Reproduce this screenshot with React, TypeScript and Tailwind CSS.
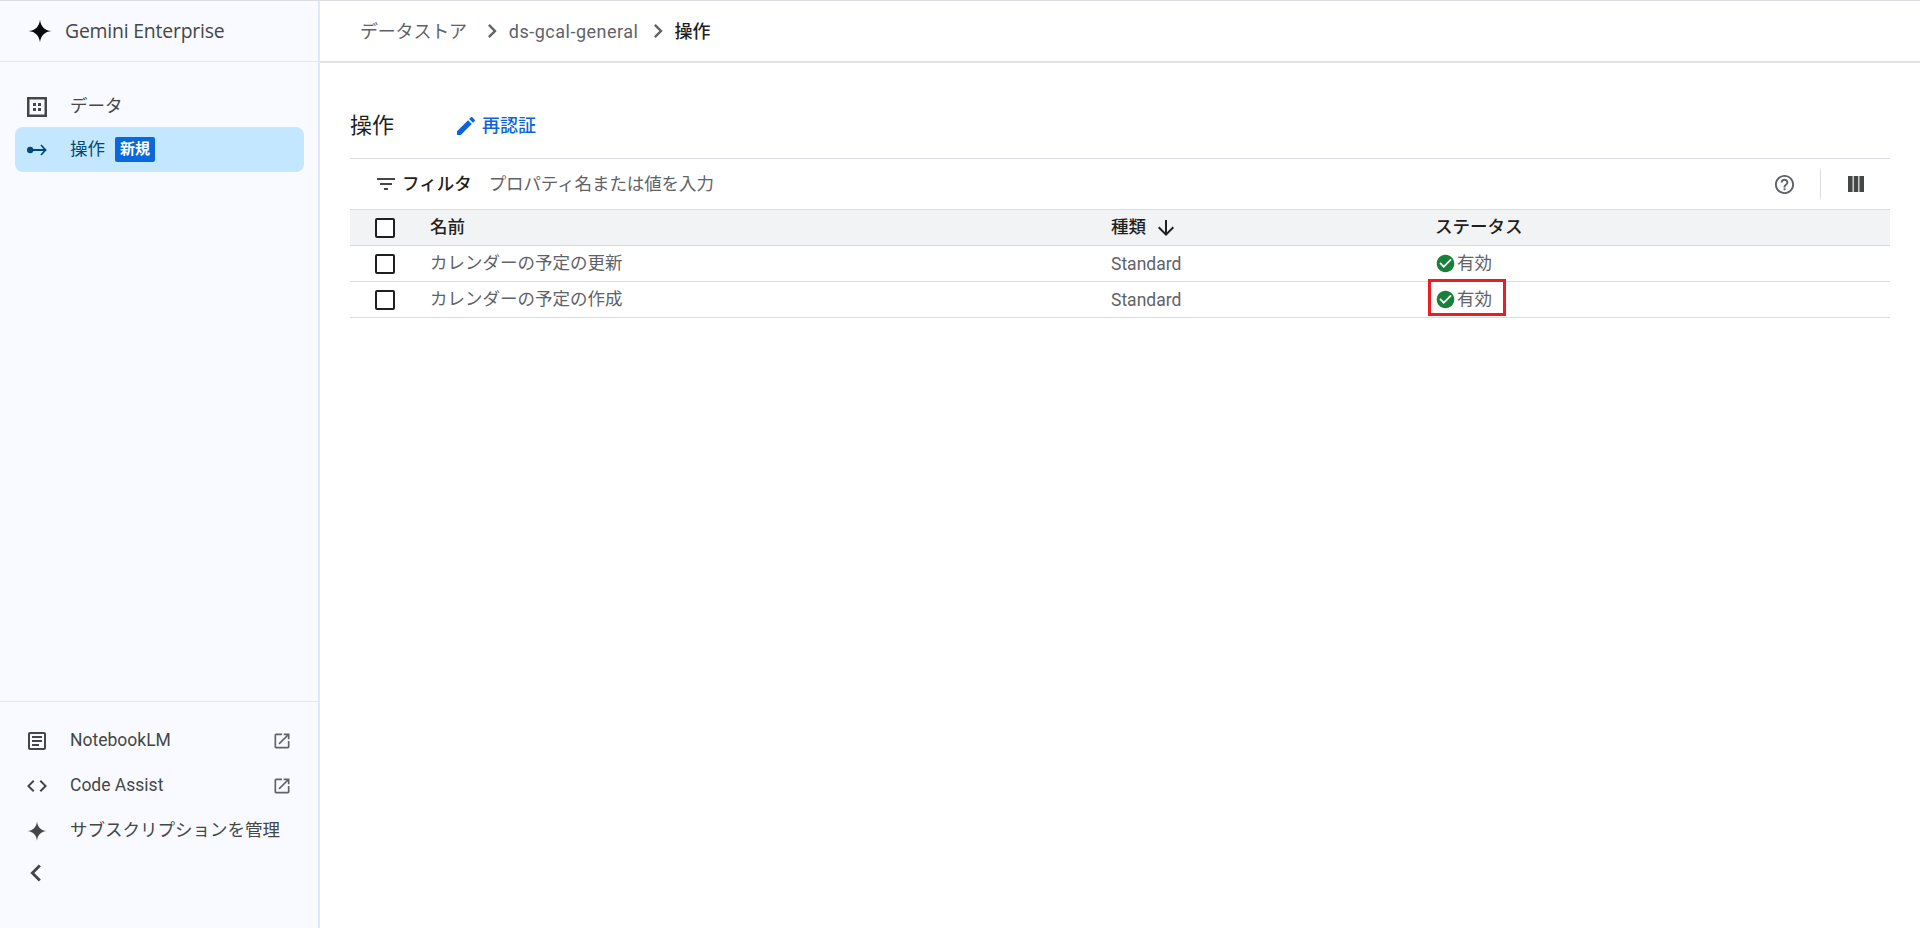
const paths = {
  article:
    "M19 5v14H5V5h14m0-2H5c-1.1 0-2 .9-2 2v14c0 1.1.9 2 2 2h14c1.1 0 2-.9 2-2V5c0-1.1-.9-2-2-2z M14 17H7v-2h7v2zm3-4H7v-2h10v2zm0-4H7V7h10v2z",
  code: "M9.4 16.6L4.8 12l4.6-4.6L8 6l-6 6 6 6 1.4-1.4zm5.2 0l4.6-4.6-4.6-4.6L16 6l6 6-6 6-1.4-1.4z",
  open: "M19 19H5V5h7V3H5c-1.11 0-2 .9-2 2v14c0 1.1.89 2 2 2h14c1.1 0 2-.9 2-2v-7h-2v7zM14 3v2h3.59l-9.83 9.83 1.41 1.41L19 6.41V10h2V3h-7z",
  left: "M15.41 7.41L14 6l-6 6 6 6 1.41-1.41L10.83 12z",
  right: "M10 6L8.59 7.41 13.17 12l-4.58 4.59L10 18l6-6z",
  edit: "M3 17.25V21h3.75L17.81 9.94l-3.75-3.75L3 17.25zM20.71 7.04c.39-.39.39-1.02 0-1.41l-2.34-2.34c-.39-.39-1.02-.39-1.41 0l-1.83 1.83 3.75 3.75 1.83-1.83z",
  filter: "M10 18h4v-2h-4v2zM3 6v2h18V6H3zm3 7h12v-2H6v2z",
  down: "M20 12l-1.41-1.41L13 16.17V4h-2v12.17l-5.58-5.59L4 12l8 8 8-8z",
  help: "M11 18h2v-2h-2v2zm1-16C6.48 2 2 6.48 2 12s4.48 10 10 10 10-4.48 10-10S17.52 2 12 2zm0 18c-4.41 0-8-3.59-8-8s3.59-8 8-8 8 3.59 8 8-3.59 8-8 8zm0-14c-2.21 0-4 1.79-4 4h2c0-1.1.9-2 2-2s2 .9 2 2c0 2-3 1.75-3 5h2c0-2.25 3-2.5 3-5 0-2.21-1.79-4-4-4z",
  check: "M12 2C6.48 2 2 6.48 2 12s4.48 10 10 10 10-4.48 10-10S17.52 2 12 2zm-2 15l-5-5 1.41-1.41L10 14.17l7.59-7.59L19 8l-9 9z",
  spark: "M12 1.5C12.6 7.6 16.4 11.4 22.5 12C16.4 12.6 12.6 16.4 12 22.5C11.4 16.4 7.6 12.6 1.5 12C7.6 11.4 11.4 7.6 12 1.5Z",
};

function Icon({ d, className }: { d: string; className: string }) {
  return (
    <svg viewBox="0 0 24 24" fill="currentColor" className={className}>
      <path d={d} />
    </svg>
  );
}

function Checkbox() {
  return <span className="block w-5 h-5 rounded-[2px] border-2 border-[#1f1f1f] bg-white" />;
}

function NavItem({ icon, label, external }: { icon: React.ReactNode; label: string; external?: boolean }) {
  return (
    <div className="flex items-center h-[45px] pl-[14px] pr-[26px] text-[#444746]">
      <span className="w-[45px] flex justify-center shrink-0">{icon}</span>
      <span className="flex-1 ml-[11px]">{label}</span>
      {external && <Icon d={paths.open} className="w-5 h-5 text-[#5f6368]" />}
    </div>
  );
}

const rows = ["カレンダーの予定の更新", "カレンダーの予定の作成"];

export default function App() {
  return (
    <div className="h-[928px] w-[1920px] overflow-hidden flex border-t border-[#dadce0] bg-white text-[17.5px] font-['Roboto','Noto_Sans_CJK_JP',sans-serif]">
      <aside className="w-[320px] shrink-0 flex flex-col bg-[#f8faff] border-r-2 border-[#dfe8fa]">
        <div className="h-[61px] shrink-0 flex items-center pl-[27px] border-b border-[#dfe8fa]">
          <Icon d={paths.spark} className="w-[26px] h-[26px] text-[#0a0a0a]" />
          <span className="ml-[12px] text-[19.4px] text-[#444746] font-['Open_Sans','Roboto',sans-serif] tracking-[-0.2px]">
            Gemini Enterprise
          </span>
        </div>

        <nav className="flex-1 pt-[22px]">
          <div className="flex items-center h-[45px] pl-[14px] text-[#444746]">
            <span className="w-[45px] flex justify-center">
              <svg viewBox="0 0 20 20" className="w-5 h-5">
                <rect x="1.25" y="1.25" width="17.5" height="17.5" fill="none" stroke="#444746" strokeWidth="2.5" />
                <rect x="6" y="6" width="3" height="3" fill="#444746" />
                <rect x="11" y="6" width="3" height="3" fill="#444746" />
                <rect x="6" y="11" width="3" height="3" fill="#444746" />
                <rect x="11" y="11" width="3" height="3" fill="#444746" />
              </svg>
            </span>
            <span className="ml-[11px]">データ</span>
          </div>
          <div className="mx-[15px] w-[289px] h-[45px] -mt-[2px] flex items-center rounded-[8px] bg-[#c2e7ff] text-[#004a77]">
            <span className="w-[45px] flex justify-center -ml-[1px]">
              <svg viewBox="0 0 20 12" className="w-5 h-3" fill="#004a77">
                <circle cx="3.2" cy="6" r="3.2" />
                <rect x="3" y="5" width="15" height="2" />
                <path d="M13.4 1.6L14.6 .6 19.8 6l-5.2 5.4-1.2-1L17.4 6z" />
              </svg>
            </span>
            <span className="ml-[11px]">操作</span>
            <span className="ml-[10px] -mt-[1px] h-[25px] w-[40px] flex items-center justify-center rounded-[2px] bg-[#0b67dc] text-white text-[15px] font-bold">
              新規
            </span>
          </div>
        </nav>

        <div className="h-[227px] shrink-0 border-t border-[#dfe8fa] pt-[16px]">
          <NavItem icon={<Icon d={paths.article} className="w-[24px] h-[24px]" />} label="NotebookLM" external />
          <NavItem icon={<Icon d={paths.code} className="w-[24px] h-[24px]" />} label="Code Assist" external />
          <NavItem icon={<Icon d={paths.spark} className="w-[22px] h-[22px]" />} label="サブスクリプションを管理" />
          <div className="-mt-[3px] flex items-center h-[45px] pl-[14px] text-[#444746]">
            <span className="w-[45px] flex justify-center -ml-[1px]">
              <Icon d={paths.left} className="w-[34px] h-[34px]" />
            </span>
          </div>
        </div>
      </aside>

      <main className="flex-1 min-w-0">
        <header className="h-[62px] flex items-center pl-[40px] border-b-2 border-[#e3e3e3] text-[#5f6368] text-[18px]">
          <span className="-tracking-[0.2px]">データストア</span>
          <Icon d={paths.right} className="ml-[11px] w-7 h-7" />
          <span className="ml-[3px] tracking-[0.5px]">ds-gcal-general</span>
          <Icon d={paths.right} className="ml-[6px] w-7 h-7" />
          <span className="ml-[2px] text-[#1f1f1f] font-medium">操作</span>
        </header>

        <section className="px-[30px]">
          <div className="h-[95px] flex items-center pt-[30px]">
            <h1 className="text-[22px] text-[#1f1f1f]">操作</h1>
            <button className="ml-[60px] flex items-center text-[#0b65d8] font-medium text-[18px]">
              <Icon d={paths.edit} className="w-[24px] h-[24px]" />
              <span className="ml-[4px]">再認証</span>
            </button>
          </div>

          <div className="border-t border-[#dadce0]">
            <div className="h-[50px] flex items-center pl-[24px] pr-[26px]">
              <Icon d={paths.filter} className="w-6 h-6 text-[#444746]" />
              <span className="ml-[4px] font-medium text-[#1f1f1f]">フィルタ</span>
              <span className="ml-[17px] text-[#5f6368] -tracking-[0.1px]">プロパティ名または値を入力</span>
              <Icon d={paths.help} className="ml-auto w-[23px] h-[23px] text-[#5f6368]" />
              <span className="ml-[24px] h-[30px] w-px bg-[#dadce0]" />
              <svg viewBox="0 0 16 16" className="ml-[27px] w-4 h-4 text-[#444746]" fill="currentColor">
                <rect x="0" y="0" width="4.6" height="16" />
                <rect x="5.7" y="0" width="4.6" height="16" />
                <rect x="11.4" y="0" width="4.6" height="16" />
              </svg>
            </div>

            <div className="h-[37px] flex items-center border-y border-[#dadce0] bg-[#f1f3f4] text-[#1f1f1f] font-medium">
              <span className="w-[80px] pl-[25px]"><Checkbox /></span>
              <span className="w-[681px]">名前</span>
              <span className="w-[324px] flex items-center">
                種類
                <Icon d={paths.down} className="ml-[8px] w-[24px] h-[24px]" />
              </span>
              <span>ステータス</span>
            </div>

            {rows.map((row, i) => (
              <div key={row} className="h-[36px] flex items-center border-b border-[#dadce0] text-[#5f6368]">
                <span className="w-[80px] pl-[25px]"><Checkbox /></span>
                <span className="w-[681px]">{row}</span>
                <span className="w-[324px] pt-[1px]">Standard</span>
                <span className="relative flex items-center">
                  <Icon d={paths.check} className="w-[21px] h-[21px] text-[#188038]" />
                  <span className="ml-[1px]">有効</span>
                  {i === 1 && (
                    <span className="absolute left-[-7px] top-[-7px] w-[78px] h-[37px] border-[3px] border-[#ec1c24]" />
                  )}
                </span>
              </div>
            ))}
          </div>
        </section>
      </main>
    </div>
  );
}
